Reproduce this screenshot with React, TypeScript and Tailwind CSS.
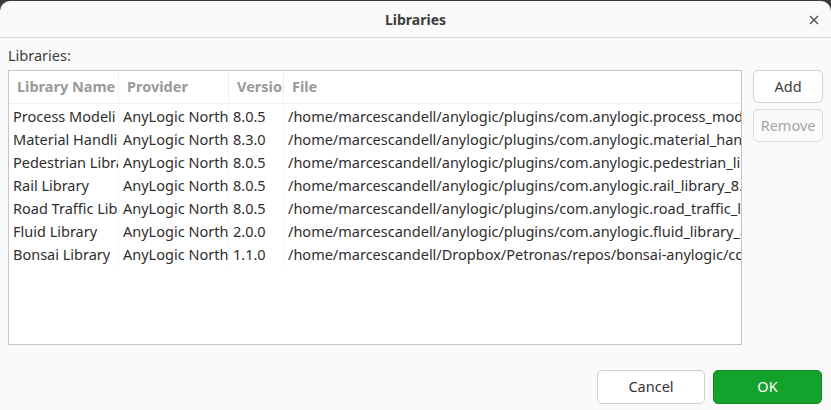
import React from "react";

const rows = [
  ["Process Modeli", "AnyLogic North", "8.0.5", "/home/marcescandell/anylogic/plugins/com.anylogic.process_mode"],
  ["Material Handli", "AnyLogic North", "8.3.0", "/home/marcescandell/anylogic/plugins/com.anylogic.material_hand"],
  ["Pedestrian Libra", "AnyLogic North", "8.0.5", "/home/marcescandell/anylogic/plugins/com.anylogic.pedestrian_lib"],
  ["Rail Library", "AnyLogic North", "8.0.5", "/home/marcescandell/anylogic/plugins/com.anylogic.rail_library_8."],
  ["Road Traffic Lib", "AnyLogic North", "8.0.5", "/home/marcescandell/anylogic/plugins/com.anylogic.road_traffic_l"],
  ["Fluid Library", "AnyLogic North", "2.0.0", "/home/marcescandell/anylogic/plugins/com.anylogic.fluid_library_8"],
  ["Bonsai Library", "AnyLogic North", "1.1.0", "/home/marcescandell/Dropbox/Petronas/repos/bonsai-anylogic/co"],
];

const cols = ["w-[110px]", "w-[110px]", "w-[55px]", "flex-1"];

export default function App() {
  return (
    <div
      className="w-[831px] h-[410px] bg-[#3a3a3a] overflow-hidden text-[#3d3d3d]"
      style={{ fontFamily: '"Noto Sans", "Open Sans", sans-serif' }}
    >
      <div className="mt-[1px] h-[409px] bg-[#fafafa] rounded-t-[10px] flex flex-col">
        <div className="h-[37px] shrink-0 border-b border-[#d9d9d9] flex items-center justify-center relative">
          <span className="text-[14px] font-bold text-[#3d3d3d]">Libraries</span>
          <span className="absolute right-[12px] top-[14px]">
            <svg width="10" height="10" viewBox="0 0 10 10">
              <path d="M1 1 L9 9 M9 1 L1 9" stroke="#4a4a4a" strokeWidth="1.3" />
            </svg>
          </span>
        </div>
        <div className="flex-1 flex flex-col px-[8px]">
          <div className="h-[32px] flex items-center text-[14.5px] pt-[4px]">Libraries:</div>
          <div className="flex gap-[11px]">
            <div className="w-[735px] h-[275px] border border-[#c6c6c6] bg-white overflow-hidden">
              <div className="h-[33px] flex border-b border-[#efefef] text-[14.5px] font-bold text-[#999999]">
                {["Library Name", "Provider", "Version", "File"].map((h, i) => (
                  <div
                    key={h}
                    className={`${cols[i]} shrink-0 overflow-hidden whitespace-nowrap flex items-center pl-[8px] ${i < 3 ? "border-r border-[#f0f0f0]" : ""}`}
                  >
                    {h}
                  </div>
                ))}
              </div>
              <div className="pt-[1px]">
                {rows.map((r, ri) => (
                  <div key={ri} className="h-[23px] flex text-[14.5px] text-[#2e2e2e]">
                    {r.map((c, i) => (
                      <div
                        key={i}
                        className={`${cols[i]} shrink-0 overflow-hidden whitespace-nowrap flex items-center pl-[4px] ${i < 3 ? "border-r border-[#f7f7f7]" : ""}`}
                      >
                        {c}
                      </div>
                    ))}
                  </div>
                ))}
              </div>
            </div>
            <div className="flex flex-col gap-[6px] w-[70px]">
              <button className="h-[33px] rounded-[5px] border border-[#d0d0d0] bg-white text-[14.5px] text-[#3d3d3d]">Add</button>
              <button className="h-[33px] rounded-[5px] border border-[#dcdcdc] bg-[#fafafa] text-[14.5px] text-[#a5a5a5]">Remove</button>
            </div>
          </div>
          <div className="flex justify-end gap-[8px] mt-[25px] pr-[1px]">
            <button className="w-[108px] h-[34px] rounded-[5px] border border-[#d0d0d0] bg-white text-[14.5px] text-[#333333]">Cancel</button>
            <button className="w-[109px] h-[34px] rounded-[5px] border border-[#118a25] bg-[#13a32c] text-[14.5px] text-white">OK</button>
          </div>
        </div>
      </div>
    </div>
  );
}
